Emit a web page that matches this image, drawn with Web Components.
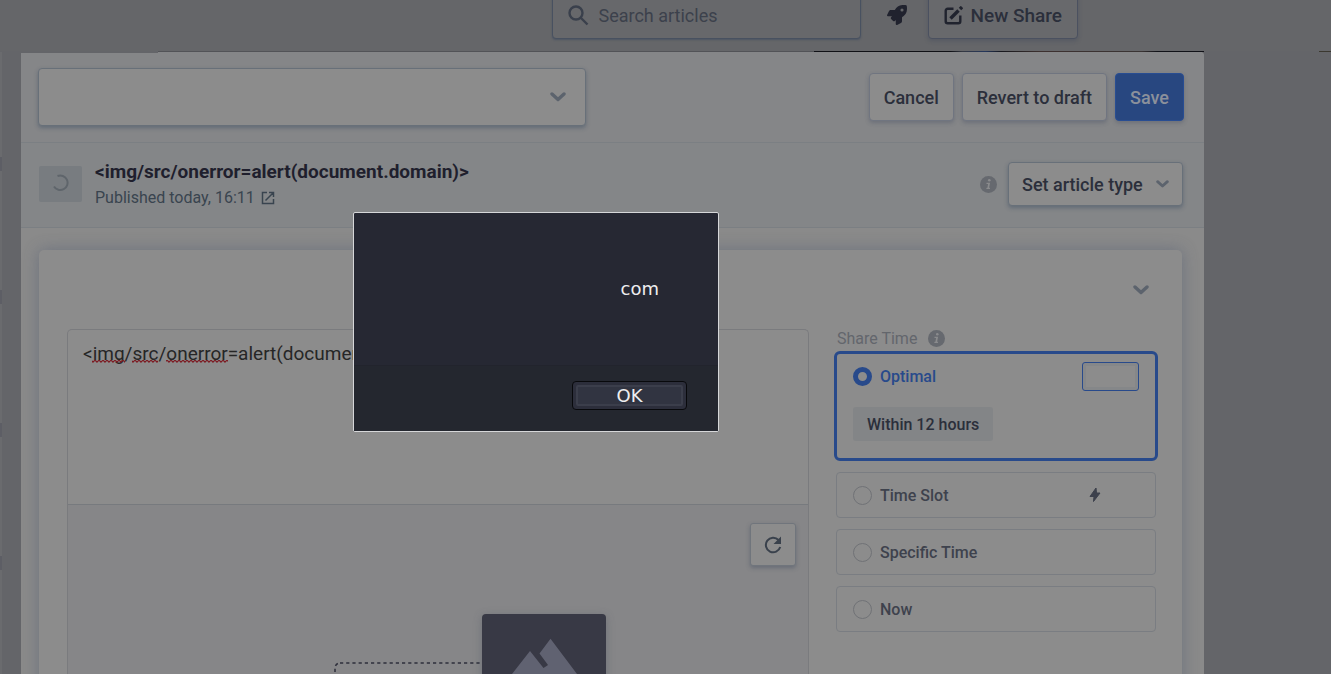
<!DOCTYPE html>
<html lang="en">
<head>
<meta charset="utf-8">
<title>Share article</title>
<style>
html, body { margin: 0; height: 100%; overflow: hidden; background: #646569; }
body { font-family: Roboto, "Liberation Sans", sans-serif; color: #2b2f3b; }
</style>
</head>
<body>
<share-app></share-app>
<script>
const reset = `*, *::before, *::after { box-sizing: border-box; }
button, input, select, textarea { font: inherit; color: inherit; margin: 0; outline: none; }
svg { display: block; flex: none; }
[hidden] { display: none; }`;

function define(name, css, html) {
  const template = document.createElement('template');
  template.innerHTML = `<style>${reset}${css}</style>${html}`;
  customElements.define(name, class extends HTMLElement {
    constructor() {
      super();
      this.attachShadow({ mode: 'open' }).append(template.content.cloneNode(true));
    }
  });
}

define('chevron-icon', `
:host { display: block; color: #5c636d; pointer-events: none; }
svg { width: var(--size, 16px); height: auto; }`,
`<svg width="16" height="10" viewBox="0 0 16 10" fill="none" stroke="currentColor" stroke-width="3.400" stroke-linecap="round" stroke-linejoin="round"><path d="M2 2l6 5.500L14 2"/></svg>`);

define('info-icon', `
:host { display: block; flex: none; }`,
`<svg width="17" height="17" viewBox="0 0 17 17"><circle cx="8.500" cy="8.500" r="8.500" fill="#66696f"/><circle cx="9.300" cy="4.300" r="1.300" fill="#8a8b8d"/><path d="M6.600 6.700h3.500L9.100 11.800h1l-.2 1.200H6.300l.2-1.200h.9L8.100 7.900H6.400z" fill="#8a8b8d"/></svg>`);

define('action-button', `
:host { display: block; }
button { display: flex; align-items: center; gap: 7px; height: 48px; padding: 0 14px; border: 1px solid #707580; border-radius: 4px; background: #8c8c8c; color: #2b2f3b; font-size: 18px; font-weight: 500; white-space: nowrap; box-shadow: 0 2px 4px rgba(50, 60, 85, .3); }
:host([primary]) button { background: #284780; border-color: #284d92; color: #8b909b; }
:host([ghost]) button { padding: 0 15px; background: transparent; border-color: #4b5160; background: #68696c; font-size: 19px; }`,
`<button type="button"><slot></slot></button>`);

define('top-bar', `
:host { display: flex; flex: none; align-items: flex-end; justify-content: flex-end; height: 51px; padding: 0 253px 12px 0; overflow: hidden; background: #656669; }
label { display: flex; align-items: center; flex: none; width: 309px; height: 48px; padding: 0 15px; gap: 9px; border: 1px solid #485160; border-radius: 4px; background: #67686b; box-shadow: 0 1px 2px rgba(40, 60, 90, .4); color: #3a404c; }
input { flex: 1; min-width: 0; border: 0; padding: 0; background: none; font-size: 18px; }
input::placeholder { color: #3c414c; opacity: 1; }
.rocket { margin: 0 21px 0 26px; padding: 0; border: 0; background: none; height: 48px; color: #20222e; }`,
`<label><svg width="21" height="21" viewBox="0 0 21 21" fill="none" stroke="currentColor" stroke-width="2.400"><circle cx="8" cy="8" r="6.500"/><path d="M12.500 12.500l7 7"/></svg><input type="text" placeholder="Search articles" aria-label="Search articles"></label>
<button class="rocket" type="button" aria-label="Boost"><svg width="20" height="20" viewBox="0 0 512 512" fill="currentColor"><path d="M505 19.400c-1.200-5.900-7.200-11.800-13-13-31.900-6.900-56.900-6.900-81.800-6.900-102.600 0-164 55-209.900 128H94.900c-16.300 0-35.600 11.900-42.900 26.500L2.500 253A24 24 0 0 0 0 264a24 24 0 0 0 24 24h103.800l-22.500 22.500c-11.400 11.400-13 32.300 0 45.200l50.900 51c11.200 11.100 32.200 13.200 45.300 0l22.500-22.500V488a24 24 0 0 0 24 24 24 24 0 0 0 10.700-2.500l98.700-49.400c14.600-7.300 26.500-26.600 26.500-42.900V311.800c72.700-46 128-107.700 128-209.900.1-25.100.1-50-6.900-82.500zM384 168a40 40 0 1 1 0-80 40 40 0 0 1 0 80z"/></svg></button>
<action-button ghost><svg width="19" height="19" viewBox="0 0 19 19" fill="none" stroke="#20232e" stroke-width="2.400"><path d="M9.500 2.700H3.700a2 2 0 0 0-2 2v10.600a2 2 0 0 0 2 2h10.600a2 2 0 0 0 2-2V9.500"/><path d="M6.500 12.500l8-8" stroke-width="3.400"/><path d="M16 3l2-2" stroke-width="3.400"/></svg><span>New Share</span></action-button>`);

define('edge-strip', `
:host { display: flex; flex: none; height: 1px; }
i { display: block; height: 1px; }
.soft { flex: 1; margin-left: 158px; background: #525357; }
.cover { width: 390px; background: linear-gradient(90deg, #101116 35%, #343842 38%, #24365b 44%, #17181d 48%, #3c302f 58%, #3a3434 84%, #111218 88%); }
.next { width: 12px; margin-left: 115px; background: #3b3830; }`,
`<i class="soft"></i><i class="cover"></i><i class="next"></i>`);

define('side-rail', `
:host { display: flex; flex-direction: column; gap: 119px; width: 2px; margin-right: 19px; padding-top: 105px; background: #6a6b6e; flex: none; }
i { display: block; height: 14px; background: #5d5e65; }`,
`<i></i><i></i><i></i><i></i>`);

define('drop-down', `
:host { display: grid; align-items: center; }
select { grid-area: 1 / 1; width: 100%; height: var(--h); padding: 0 13px; border: 1px solid #687079; border-radius: 4px; appearance: none; background: #8c8c8c; color: #2b2f3b; font-size: 18px; font-weight: 500; box-shadow: 0 2px 4px rgba(45, 65, 90, .4); }
chevron-icon { grid-area: 1 / 1; justify-self: end; margin-right: var(--edge, 20px); }`,
`<select></select><chevron-icon></chevron-icon>`);

define('modal-header', `
:host { display: flex; flex: none; box-sizing: border-box; align-items: center; gap: 8px; height: 91px; padding: 0 20px 0 17px; border-bottom: 1px solid #7b7f83; background: linear-gradient(#646569, #646569) 0 0 / 137px 1px no-repeat #858688; }
drop-down { --h: 58px; width: 548px; margin-right: auto; }`,
`<drop-down data-label="Profile" data-text=""></drop-down>
<action-button>Cancel</action-button><action-button>Revert to draft</action-button><action-button primary>Save</action-button>`);

define('article-header', `
:host { display: flex; flex: none; box-sizing: border-box; align-items: center; height: 85px; padding: 0 21px 2px 18px; border-bottom: 1px solid #7b7f83; background: #848688; }
.thumb { display: grid; place-items: center; width: 43px; height: 36px; margin-right: 13px; border-radius: 2px; background: #787c80; }
.text { margin-right: auto; }
h1 { margin: 0; font-size: 19px; line-height: 28px; font-weight: 700; color: #1f1f2d; }
p { display: flex; align-items: center; gap: 6px; margin: 0; font-size: 16px; line-height: 24px; color: #39444f; }
a { color: inherit; }
info-icon { margin-right: 11px; }
drop-down { --h: 44px; --edge: 14px; --size: 13px; width: 175px; }`,
`<div class="thumb"><svg width="18" height="20" viewBox="0 0 18 20" fill="none" stroke="#5f656b" stroke-width="2"><path d="M5.500 2A7.300 7.300 0 1 1 2 12.500"/></svg></div>
<div class="text"><h1>&lt;img/src/onerror=alert(document.domain)&gt;</h1><p>Published today, 16:11 <a href="#" aria-label="Open article"><svg width="14" height="14" viewBox="0 0 14 14" fill="none" stroke="currentColor" stroke-width="1.500"><path d="M6 1.500H1.500v11h11V8M8 1.500h4.500V6M12.500 1.500L4.500 9.500"/></svg></a></p></div>
<info-icon></info-icon><drop-down data-label="Article type" data-text="Set article type"></drop-down>`);

define('share-composer', `
:host { display: flex; flex-direction: column; flex: 1; min-width: 0; border: 1px solid #7a7b7e; border-bottom: 0; border-radius: 5px 5px 0 0; }
.message { position: relative; height: 174px; flex: none; }
textarea { display: block; width: 100%; height: 100%; padding: 12px 15px; border: 0; resize: none; background: none; color: #262626; font-size: 19px; line-height: 24px; }
.marks { position: absolute; left: 24px; top: 30px; }
.media { display: flex; flex-direction: column; align-items: center; flex: 1; padding: 18px 12px; border-top: 1px solid #777a7e; background: #868688; }
.media button { display: grid; place-items: center; align-self: flex-end; flex: none; width: 46px; height: 43px; padding: 0; border: 1px solid #70757c; border-radius: 3px; background: #8c8c8c; color: #39414c; box-shadow: 0 2px 4px rgba(45, 60, 85, .35); }
.art { margin-top: 44px; overflow: visible; }`,
`<div class="message"><textarea aria-label="Message" spellcheck="false">&lt;img/src/onerror=alert(document.domain)&gt;</textarea>
<svg class="marks" width="138" height="4" viewBox="0 0 138 4"><defs><pattern id="w" width="4" height="4" patternUnits="userSpaceOnUse"><path d="M-1 0l2 2.200 2-2 2 2" fill="none" stroke="#7c1a22" stroke-width="1.200"/></pattern></defs><path fill="url(#w)" d="M0 0h33v4H0zM40 0h26v4H40zM74 0h62v4H74z"/></svg></div>
<div class="media"><button type="button" aria-label="Refresh image"><svg width="18" height="18" viewBox="0 0 18 18"><path d="M14.500 4A7.300 7.300 0 1 0 16.200 11" fill="none" stroke="currentColor" stroke-width="2"/><path d="M17 .500V8H9.500z" fill="currentColor"/></svg></button>
<svg class="art" width="208" height="140" viewBox="0 0 208 140"><rect x="1" y="53" width="206" height="130" rx="5" fill="none" stroke="#2e2f3b" stroke-width="1.500" stroke-dasharray="3.200 3"/><rect x="148" y="4" width="124" height="120" rx="4" fill="#383945" style="filter:drop-shadow(0 2px 4px rgba(50,60,80,.3))"/><path fill="#606271" d="M178 64L196 41l13.500 17 4.500-3-8.500-11.500L216.500 28.700 243 64v10h-73z"/></svg></div>`);

define('time-option', `
:host { display: block; }
.box { min-height: 46px; padding: 0 16px; border: 1px solid #7a7d82; border-radius: 4px; color: #3e424d; }
label { display: flex; align-items: center; height: 44px; gap: 8px; font-size: 16px; font-weight: 500; }
input { appearance: none; flex: none; width: 19px; height: 19px; border: 1px solid #707276; border-radius: 50%; }
input:checked { border: 5px solid #284a8b; }
.end { margin-left: auto; }
:host([active]) .box { margin: 0 -2px; height: 110px; border: 3px solid #284a8b; border-radius: 6px; color: #284a8b; }`,
`<div class="box"><label><input type="radio"><span></span><slot class="end" name="end"></slot></label><slot></slot></div>`);

define('share-times', `
:host { display: flex; flex-direction: column; gap: 11px; width: 320px; flex: none; }
.title { display: flex; align-items: center; gap: 11px; height: 18px; margin: 0 0 -7px 1px; font-size: 16px; color: #63666c; }
.field { display: block; width: 57px; height: 29px; margin-left: auto; border: 1px solid #284a8b; border-radius: 3px; box-shadow: inset 0 0 0 3px #858789; }
.chip { display: block; height: 34px; margin-top: 9px; padding: 0 14px; border: 0; border-radius: 3px; background: #838587; color: #2b2f3b; font-size: 16px; font-weight: 500; }
.bolt { margin-left: auto; margin-right: 38px; color: #3c404c; }`,
`<div class="title"><span>Share Time</span><info-icon></info-icon></div>
<time-option active data-label="Optimal"><span class="field" slot="end"></span><button class="chip" type="button">Within 12 hours</button></time-option>
<time-option data-label="Time Slot"><svg class="bolt" slot="end" width="12" height="16" viewBox="0 0 12 16" fill="currentColor" stroke="currentColor" stroke-width="1" stroke-linejoin="round"><path d="M7 1L1 9.500h4L4.500 14.500 11 6H7.500z"/></svg></time-option>
<time-option data-label="Specific Time"></time-option>
<time-option data-label="Now"></time-option>`);

define('share-card', `
:host { display: flex; flex-direction: column; flex: 1; margin: 22px 22px 0 18px; padding: 0 26px 0 28px; border-radius: 5px 5px 0 0; background: #8c8c8c; box-shadow: 0 0 16px rgba(70, 85, 110, .45); }
header { display: flex; flex: none; align-items: center; justify-content: flex-end; height: 79px; padding-right: 7px; }
header button { padding: 0; border: 0; background: none; }
.row { display: flex; flex: 1; gap: 27px; }`,
`<header><button type="button" aria-label="Collapse"><chevron-icon></chevron-icon></button></header>
<div class="row"><share-composer></share-composer><share-times></share-times></div>`);

define('article-modal', `
:host { display: flex; flex-direction: column; flex: 1; min-width: 0; margin-right: 127px; border-top-right-radius: 4px; overflow: hidden; background: #8a8a8a; }`,
`<modal-header></modal-header><article-header></article-header><share-card></share-card>`);

define('alert-dialog', `
:host { position: absolute; left: 353px; top: 212px; box-sizing: border-box; width: 366px; border: 1px solid #d6d7d9; border-radius: 2px; background: #262833; color: #eeeeef; font-family: "DejaVu Sans", sans-serif; font-size: 18px; }
p { margin: 0; height: 152px; padding: 0 59px 0 0; line-height: 152px; text-align: right; }
footer { display: flex; justify-content: flex-end; height: 66px; padding: 15px 31px 0; border-top: 1px solid #22242d; background: #24272f; }
button { width: 115px; height: 29px; padding: 2px; border: 1px solid #08090c; border-radius: 4px; background: #2c2e3b; }
span { display: block; height: 21px; margin: 0 1px; border: 2px solid #3b3e4b; border-radius: 2px; background: #313441; line-height: 17px; }`,
`<p>com</p><footer><button type="button"><span>OK</span></button></footer>`);

define('share-app', `
:host { display: flex; flex-direction: column; position: relative; height: 100vh; overflow: hidden; }
main { display: flex; flex: 1; min-height: 0; }`,
`<top-bar></top-bar><edge-strip></edge-strip><main><side-rail></side-rail><article-modal></article-modal></main><alert-dialog role="alertdialog"></alert-dialog>`);

function fill(root) {
  root.querySelectorAll('*').forEach(el => {
    if (!el.shadowRoot) return;
    if (el.localName === 'drop-down') {
      const select = el.shadowRoot.querySelector('select');
      select.setAttribute('aria-label', el.dataset.label);
      select.add(new Option(el.dataset.text));
    }
    if (el.localName === 'time-option') {
      const radio = el.shadowRoot.querySelector('input');
      radio.checked = el.hasAttribute('active');
      el.shadowRoot.querySelector('label span').textContent = el.dataset.label;
    }
    fill(el.shadowRoot);
  });
}
fill(document);
</script>
</body>
</html>
